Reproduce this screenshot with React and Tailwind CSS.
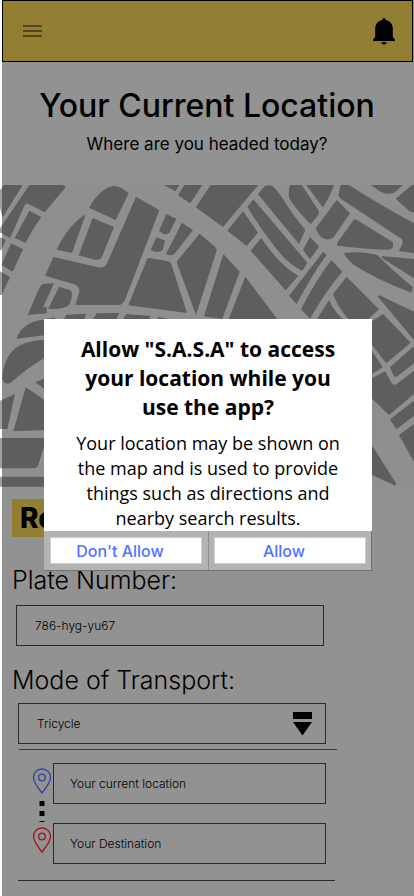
import React from "react";

const northWestBlocks = [
  "M12 15H68L8 112L2 92L0 80V30Z",
  "M88 15H185Q198 16 195 24L134 97L85 72Q77 70 73 78L30 175L5 160L0 158V145Z",
  "M88 92L124 111Q95 150 77 189L44 174Z",
  "M0 172L18 180L5 208L0 212Z",
  "M33 190L69 208L38 275L4 255Z",
  "M0 274L30 292L5 345H0Z",
  "M267 83Q300 25 340 18Q362 18 386 40L347 120Z",
  "M257 103L216 219L170 209Q205 135 257 103Z",
  "M278 114L342 141L307 228Q300 242 285 239L236 226Z",
  "M408 50L478 91L375 360Q368 375 355 375H226L238 335Q240 318 220 312L135 287L160 231L295 262Q315 265 322 248Z",
  "M499 102L529 116L509 157Q500 166 490 161L477 152Z",
  "M546 128L579 150L525 220Q515 230 498 222Z",
  "M470 171L495 182L488 210Q475 222 452 210Z",
  "M443 233L505 244Q512 246 515 255L561 399L385 376Z",
  "M599 161L645 200Q652 207 649 215L588 405L531 250Q530 245 534 240Z",
  "M130 312Q137 310 162 310L130 380Q124 394 83 406L115 330Q122 315 130 312Z",
  "M177 320L210 330Q218 335 215 350Q212 375 200 380Q180 388 145 387Z",
  "M200 404L258 401L252 420H190Z",
  "M290 400L358 399L348 420H278Z",
  "M378 402L452 408L447 420H368Z",
  "M475 411L520 420H470Z",
  "M135 417L165 412L160 420Z",
  "M492 15H538L526 34Z",
  "M553 15H607L571 70L534 46Z",
];

const northEastBlocks = [
  "M20 15H163L57 141L-25 82Z",
  "M117 93L162 158L128 198L70 152Z",
  "M148 58L310 248Q302 262 295 272Q255 255 220 210Q170 148 130 80Z",
  "M162 43L180 20Q190 12 205 18Q225 35 245 70Q270 110 304 150L285 192Z",
  "M172 174Q230 260 283 287L245 331L140 212Z",
  "M258 15H293L343 90Q346 98 343 105L320 133Q270 82 256 55Q252 35 258 15Z",
  "M307 15H390Q380 45 357 83Z",
  "M398 60L438 100L390 170Q370 190 345 165L335 145Z",
  "M403 45L410 15H435Q520 70 630 130V220L585 213L596 190Q598 178 585 172L408 55Z",
  "M500 15H598L570 38Q550 45 530 35Z",
  "M630 15H624L575 56L615 92Q622 97 630 97Z",
  "M455 118L565 185Q572 200 560 208Q545 213 400 197Q398 192 402 185L445 125Q450 118 455 118Z",
  "M318 170L345 200L318 238L297 210Z",
  "M358 215L368 225Q330 275 278 372L255 347Z",
  "M382 240L415 275Q360 340 318 417L291 388Q330 310 382 240Z",
  "M428 290L525 388L490 420H435Q400 380 387 342Z",
  "M375 360Q390 395 420 420H337Z",
  "M420 220Q470 212 520 225Q575 280 627 322L622 338Q520 300 450 255Q430 240 420 220Z",
  "M532 228L630 237V295L535 235Z",
  "M58 222L107 275L55 417L0 409Z",
  "M124 290L222 420H73Z",
  "M525 345L630 395V480L522 350Z",
];

const southWestBlocks = [
  "M83 15Q95 0 120 -8H140V10Z",
  "M50 86Q65 35 140 28V75Z",
  "M140 88V142Q100 160 30 220Q10 225 7 205Q10 150 40 120Q65 95 140 88Z",
  "M105 217L140 203V242Z",
  "M77 232L140 274V360L40 364Z",
  "M0 272L45 252L22 357H0Z",
  "M0 384H140L115 465Q110 475 100 475H0Z",
  "M0 500H140V530H0Z",
];

const southEastBlocks = [
  "M57 12L140 98L67 160L20 100V37Z",
  "M20 116L56 172L20 194Z",
  "M78 172L146 112H150V160L98 200Q91 202 88 196Z",
  "M20 206L64 184L82 218Q90 228 98 222L150 182V252L75 315L20 262Z",
  "M78 328L150 272V318L97 358Z",
  "M105 375L150 342V455Z",
  "M20 400L96 520Q97 529 91 526L20 493Z",
];

function Blocks({ paths, origin }) {
  return (
    <g transform={`translate(${origin}) scale(0.3333)`}>
      {paths.map((d) => (
        <path key={d} d={d} />
      ))}
    </g>
  );
}

function CityMap() {
  return (
    <svg
      viewBox="0 185 414 302"
      className="block w-full fill-[#5e5e5e]"
      role="img"
      aria-label="Map"
    >
      <rect x="2" y="185" width="412" height="302" fill="#8f8f8f" />
      <Blocks paths={northWestBlocks} origin="0 180" />
      <Blocks paths={northEastBlocks} origin="204 180" />
      <Blocks paths={southWestBlocks} origin="0 310" />
      <Blocks paths={southEastBlocks} origin="364 310" />
      <rect x="0" y="185" width="2" height="302" fill="#ffffff" opacity="0.4" />
    </svg>
  );
}

function Bell() {
  return (
    <svg viewBox="0 0 24 28" className="h-7 w-6" fill="#000" aria-hidden="true">
      <path d="M12 1C10.800 1 10.200 1.800 10.200 3C6 4 3.200 7 3.200 11.500V20L1 22.500V24H23V22.500L20.800 20V11.500C20.800 7 18 4 13.800 3C13.800 1.800 13.200 1 12 1Z" />
      <path d="M9 25.300H15C14.600 26.700 13.400 27.500 12 27.500C10.600 27.500 9.400 26.700 9 25.300Z" />
    </svg>
  );
}

function Pin({ className }) {
  return (
    <svg
      viewBox="0 0 20 26"
      className={`h-[26px] w-5 ${className}`}
      fill="none"
      stroke="currentColor"
      strokeWidth="1.3"
      aria-hidden="true"
    >
      <path d="M10 25C6.500 20.500 1.500 14.500 1.500 9.500C1.500 4.500 5 1 10 1C15 1 18.500 4.500 18.500 9.500C18.500 14.500 13.500 20.500 10 25Z" />
      <circle cx="10" cy="9.500" r="3.300" />
    </svg>
  );
}

const field =
  "block h-[41px] w-full appearance-none border border-[#2b2b2b] bg-transparent text-xs font-light text-black placeholder:text-black outline-none";

export default function App() {
  return (
    <div className="relative min-h-screen bg-white pl-[2px] font-['Inter',sans-serif] text-black">
      <div className="min-h-screen bg-[#929292]">
        <header className="mr-px flex h-[62px] items-center justify-between border border-black bg-[#937f33] pr-4 pl-5">
          <button type="button" aria-label="Menu" className="flex w-[19px] flex-col gap-[3px]">
            <span className="h-[2px] bg-[#50461f]" />
            <span className="h-[2px] bg-[#50461f]" />
            <span className="h-[2px] bg-[#50461f]" />
          </button>
          <button type="button" aria-label="Notifications">
            <Bell />
          </button>
        </header>

        <section className="flex h-[123px] flex-col items-center pt-6 pr-[2px] text-center">
          <h1 className="text-[32px] leading-10 font-medium whitespace-nowrap">Your Current Location</h1>
          <p className="mt-1 text-[17px] leading-7">Where are you headed today?</p>
        </section>

        <div className="-ml-[2px]">
          <CityMap />
        </div>

        <form className="pr-[88px] pb-4 pl-[10px]">
          <h2 className="mt-3 w-fit bg-[#937f33] px-2 text-[28px] leading-[38px] font-extrabold">Re</h2>

          <label htmlFor="plate" className="mt-[25px] block text-[25px] leading-9 font-light">
            Plate Number:
          </label>
          <div className="mt-[7px] mr-[2px] ml-1">
            <input id="plate" defaultValue="786-hyg-yu67" className={`${field} pl-[18px]`} />
          </div>

          <label htmlFor="mode" className="mt-4 block text-[25px] leading-9 font-light">
            Mode of Transport:
          </label>
          <div className="relative mt-[5px] ml-[6px]">
            <select id="mode" defaultValue="Tricycle" className={`${field} pl-[18px]`}>
              <option>Tricycle</option>
            </select>
            <svg
              viewBox="0 0 19 24"
              className="pointer-events-none absolute top-[9px] right-[14px] h-6 w-[19px]"
              aria-hidden="true"
            >
              <path d="M0 0H19V7H0ZM0 10H19L9.500 23.500Z" />
            </svg>
          </div>

          <div className="mt-[5px] -mr-[11px] ml-[7px] border-t border-[#3c3c3c]" />

          <div className="mt-[13px] ml-5 flex gap-[2px]">
            <div className="flex w-[19px] shrink-0 flex-col items-center pt-[5px]">
              <Pin className="text-[#33429b]" />
              <svg viewBox="0 0 6 22" className="mt-[7px] mb-[4px] h-[22px] w-[6px]" aria-hidden="true">
                <path d="M0.500 0H5.500V5H0.500ZM0.500 10H5.500V15H0.500ZM0.500 20H5.500V21H0.500Z" />
              </svg>
              <Pin className="text-[#a01616]" />
            </div>
            <div className="flex min-w-0 flex-1 flex-col gap-[19px]">
              <input
                aria-label="Your current location"
                placeholder="Your current location"
                className={`${field} pl-4`}
              />
              <input aria-label="Your Destination" placeholder="Your Destination" className={`${field} pl-4`} />
            </div>
          </div>

          <div className="mt-4 -mr-[9px] ml-[6px] border-t border-[#2b2b2b]" />
        </form>
      </div>

      <div
        role="dialog"
        aria-labelledby="dialog-title"
        aria-describedby="dialog-text"
        className="absolute top-[319px] right-0 left-[2px] mx-auto w-[328px] bg-white font-['Open_Sans','Noto_Sans',sans-serif]"
      >
        <div className="h-[212px] px-4 pt-4 text-center">
          <h2 id="dialog-title" className="text-[21px] leading-[29px] font-bold">
            Allow "S.A.S.A" to access
            <br />
            your location while you
            <br />
            use the app?
          </h2>
          <p id="dialog-text" className="mt-[9px] text-lg leading-[25px] whitespace-nowrap">
            Your location may be shown on
            <br />
            the map and is used to provide
            <br />
            things such as directions and
            <br />
            nearby search results.
          </p>
        </div>
        <div className="flex h-10 border-r border-b border-[#71716f] bg-[#b3b3b1] font-['Inter',sans-serif] text-base leading-[22px] font-medium text-[#5271ff]">
          <div className="flex-1 border-r border-[#8d8d8b] px-[6px] py-[6px]">
            <button type="button" className="block h-full w-full border border-[#cfcfcd] bg-white pr-3">
              Don't Allow
            </button>
          </div>
          <div className="flex-1 px-[5px] py-[6px]">
            <button type="button" className="block h-full w-full border border-[#cfcfcd] bg-white pr-3">
              Allow
            </button>
          </div>
        </div>
      </div>
    </div>
  );
}
